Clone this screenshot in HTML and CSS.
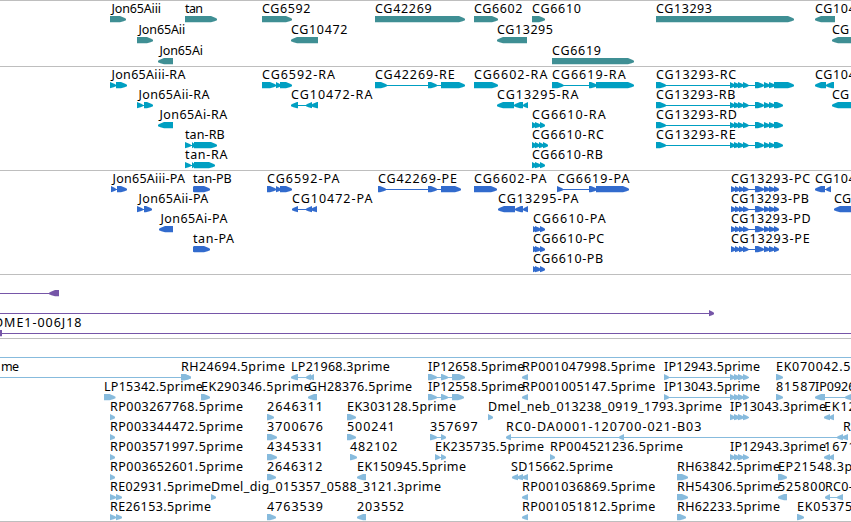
FILE: index.html
```html
<!DOCTYPE html>
<html lang="en">
<head>
<meta charset="utf-8">
<title>Genome browser</title>
<link rel="stylesheet" href="styles.css">
</head>
<body>
<main class="browser">
  <section class="track track--genes"><svg class="lane" data-track="genes"></svg></section>
  <section class="track track--transcripts"><svg class="lane" data-track="transcripts"></svg></section>
  <section class="track track--proteins"><svg class="lane" data-track="proteins"></svg></section>
  <section class="track track--clones"><svg class="lane" data-track="clones"></svg></section>
  <section class="track track--ests"><svg class="lane" data-track="ests"></svg></section>
</main>
<script src="tracks.js"></script>
</body>
</html>
```
FILE: styles.css
```css
body {
  margin: 0;
  background: #fff;
  overflow: hidden;
}

.browser {
  display: flex;
  flex-direction: column;
  width: 100%;
  height: 522px;
}

.track {
  box-sizing: border-box;
  flex: none;
  border-top: 1px solid #bebebe;
  overflow: hidden;
}

.lane {
  display: block;
  width: 100%;
  height: 100%;
}

.track--genes { height: 66px; color: #3f8f94; }
.track--transcripts { height: 104px; color: #009fc2; }
.track--proteins { height: 104px; color: #326bcd; }
.track--clones { height: 64px; color: #7656a8; }
.track--ests { height: 184px; color: #87bbdd; border-bottom: 1px solid #bebebe; }

.label {
  font-family: "Noto Sans", "DejaVu Sans", sans-serif;
  font-size: 12.5px;
  fill: #000;
}

.exon,
.intron {
  fill: currentColor;
}

.intron {
  shape-rendering: crispEdges;
}
```
FILE: tracks.js
```js
// Feature: [row, strand, label, label x, label end x, exons as "start-end ..."]
const mid = "755-764 764-770 769-775 ";
const four = "730-735 734-740 738-744 743-748.5";
const pFour = "731-736 735-740 739-744 743-748.5 ";

const tracks = {
  genes: { pitch: 21, items: [
    [0, 1, "Jon65Aiii", 110, 160.3, "110-126"],
    [0, 1, "tan", 185, 202.3, "185-217"],
    [0, 1, "CG6592", 262, 309.7, "262-292"],
    [0, 1, "CG42269", 375, 431, "375-465"],
    [0, 1, "CG6602", 474, 521.7, "474-498"],
    [0, 1, "CG6610", 532, 580.3, "532-545"],
    [0, 1, "CG13293", 656, 711.3, "656-794"],
    [0, -1, "CG10471", 815, 870.5, "815-835"],
    [1, 1, "Jon65Aii", 137, 184.5, "137-153"],
    [1, -1, "CG10472", 291, 346.7, "291-318"],
    [1, -1, "CG13295", 497, 552.3, "497-527"],
    [1, -1, "CG", 832, 848.3, "832-870"],
    [2, -1, "Jon65Ai", 158, 202.3, "158-173"],
    [2, 1, "CG6619", 552, 600.3, "552-634"]
  ]},
  transcripts: { pitch: 20, items: [
    [0, 1, "Jon65Aiii-RA", 110, 184.7, "110-116 116-127"],
    [0, 1, "CG6592-RA", 262, 334.3, "262-276 276-281 280-292"],
    [0, 1, "CG42269-RE", 375, 454, "375-387 428-437 441-465"],
    [0, 1, "CG6602-RA", 474, 546.7, "474-498"],
    [0, 1, "CG6619-RA", 552, 625, "552-563.5 589-597 596-634"],
    [0, 1, "CG13293-RC", 656, 735.5, "656-666 " + four + " " + mid + "774-794"],
    [0, -1, "CG10471", 815, 870.5, "815-826 826-834"],
    [1, 1, "Jon65Aii-RA", 137, 208.7, "137-143 144-153"],
    [1, -1, "CG10472-RA", 291, 371.7, "291-298 306-312 311-318"],
    [1, -1, "CG13295-RA", 497, 577.7, "497-514 514-523 523-528"],
    [1, 1, "CG13293-RB", 656, 734.7, "656-666 " + four + " " + mid + "774-783"],
    [1, -1, "CG", 832, 848.3, "832-870"],
    [2, -1, "Jon65Ai-RA", 158, 226.5, "158-173"],
    [2, 1, "CG6610-RA", 532, 605, "532-537 535-541 540-545"],
    [2, 1, "CG13293-RD", 656, 736.3, "656-666 " + four + " " + mid + "774-783"],
    [3, 1, "tan-RB", 185, 224, "185-191 192-195 194-217"],
    [3, 1, "CG6610-RC", 532, 603.3, "532-537 535-540 539-544 543-548"],
    [3, 1, "CG13293-RE", 656, 735, "656-666 " + four + " " + mid + "774-783"],
    [4, 1, "tan-RA", 185, 226.7, "185-191 192-195 194-215"],
    [4, 1, "CG6610-RB", 532, 602.3, "532-537 535-541 540-545"]
  ]},
  proteins: { pitch: 20, items: [
    [0, 1, "Jon65Aiii-PA", 111, 184.3, "111-116 117-127"],
    [0, 1, "tan-PB", 193, 231, "193-196 194-210"],
    [0, 1, "CG6592-PA", 267, 338.7, "267-276 276-281 280-292"],
    [0, 1, "CG42269-PE", 378, 456.3, "378-386 428-437 441-461"],
    [0, 1, "CG6602-PA", 474, 545.7, "474-497"],
    [0, 1, "CG6619-PA", 557, 628.7, "557-563 589-597 596-629"],
    [0, 1, "CG13293-PC", 731, 809.5, pFour + mid + "774-779"],
    [0, -1, "CG10471", 815, 870.5, "815-825 826-831"],
    [1, 1, "Jon65Aii-PA", 137, 207.5, "137-143 144-152"],
    [1, -1, "CG10472-PA", 292, 371.7, "292-298 306-312 311-317"],
    [1, -1, "CG13295-PA", 498, 577.7, "498-515 515-523 523-528"],
    [1, 1, "CG13293-PB", 731, 808.3, pFour + mid + "774-779"],
    [1, -1, "CG", 834, 850.3, "834-870"],
    [2, -1, "Jon65Ai-PA", 159, 226.7, "159-173"],
    [2, 1, "CG6610-PA", 533, 605, "533-537 535-541 540-545"],
    [2, 1, "CG13293-PD", 731, 810, pFour + mid + "774-779"],
    [3, 1, "tan-PA", 193, 233.3, "193-196 194-210"],
    [3, 1, "CG6610-PC", 533, 603.5, "533-537 535-541 540-545"],
    [3, 1, "CG13293-PE", 731, 809, pFour + mid + "774-779"],
    [4, 1, "CG6610-PB", 533, 602.5, "533-537 535-541 540-545"]
  ]},
  clones: { pitch: 20, items: [
    [0, -1, "", 0, 0, "-20--10 49-59"],
    [1, 1, "", 0, 0, "-20--10 709-714"],
    [2, -1, "DME1-006J18", -6, 80.7, "-10-2 860-870"]
  ]},
  ests: { pitch: 20, items: [
    [0, 1, "", 0, 0, "-20--10 860-870"],
    [1, 1, "me", 1, 18.3, "-20--10 181-191"],
    [1, 1, "RH24694.5prime", 181, 284.3, "181-191"],
    [1, -1, "LP21968.3prime", 291, 389, "291-298 306-311 309-314"],
    [1, 1, "IP12658.5prime", 428, 523.7, "428-437 441-448 452-465"],
    [1, -1, "RP001047998.5prime", 522, 654.5, "522-528"],
    [1, 1, "IP12943.5prime", 664, 759.3, "664-669 " + four],
    [1, 1, "EK070042.5", 776, 849.7, "776-783"],
    [2, 1, "LP15342.5prime", 104, 202, "104-115.5"],
    [2, 1, "EK290346.5prime", 201, 310, "201-210"],
    [2, -1, "GH28376.5prime", 308, 411.3, "308-317"],
    [2, 1, "IP12558.5prime", 428, 523.7, "428-437 441-448 452-464"],
    [2, -1, "RP001005147.5prime", 522, 654.5, "522-528"],
    [2, 1, "IP13043.5prime", 664, 759.3, "664-669 " + four],
    [2, 1, "81587", 776, 814.7, "776-783"],
    [2, -1, "IP0926", 815, 854.7, "815-825 845-860"],
    [3, 1, "RP003267768.5prime", 110, 242.3, "110-115"],
    [3, 1, "2646311", 267, 322.3, "267-274"],
    [3, 1, "EK303128.5prime", 347, 455.3, "347-356"],
    [3, 1, "Dmel_neb_013238_0919_1793.3prime", 488, 721.3, "488-493"],
    [3, 1, "IP13043.3prime", 730, 825.3, four],
    [3, -1, "EK12", 824, 855, "824-830 829-834"],
    [4, 1, "RP003344472.5prime", 110, 242.3, "110-115"],
    [4, 1, "3700676", 267, 322.3, "267-277"],
    [4, 1, "500241", 347, 394, "347-356"],
    [4, 1, "357697", 430, 477, "430-437 441-446"],
    [4, -1, "RC0-DA0001-120700-021-B03", 506, 700.7, "506-511 619-624 837-843 842-848"],
    [4, -1, "R", 843, 850.5, ""],
    [5, 1, "RP003571997.5prime", 110, 242.3, "110-115"],
    [5, 1, "4345331", 267, 322.3, "267-277"],
    [5, 1, "482102", 350, 396.7, "350-357"],
    [5, 1, "EK235735.5prime", 435, 543.3, "435-440 441-446"],
    [5, 1, "RP004521236.5prime", 550, 682.3, "550-555"],
    [5, 1, "IP12943.3prime", 730, 825.3, four],
    [5, -1, "1671", 824, 855, "824-830 829-834"],
    [6, 1, "RP003652601.5prime", 110, 242.3, "110-115"],
    [6, 1, "2646312", 267, 321.6, "267-276"],
    [6, -1, "EK150945.5prime", 357, 465.3, "357-366"],
    [6, -1, "SD15662.5prime", 511, 612.3, "512-518 517-523 522-528"],
    [6, 1, "RH63842.5prime", 677, 779.3, "677-688"],
    [6, 1, "EP21548.3p", 778, 851.5, "778-787"],
    [7, 1, "RE02931.5prime", 110, 210.3, "110-116 116-122"],
    [7, 1, "Dmel_dig_015357_0588_3121.3prime", 211, 440.3, "211-216"],
    [7, -1, "RP001036869.5prime", 522, 654.5, "522-528"],
    [7, 1, "RH54306.5prime", 677, 779.3, "677-688"],
    [7, -1, "525800", 778, 824.7, "778-787"],
    [7, -1, "RC0-", 825, 852, "825-830 837-843"],
    [8, 1, "RE26153.5prime", 110, 210.3, "110-116 116-122"],
    [8, 1, "4763539", 267, 322.3, "267-276"],
    [8, -1, "203552", 357, 403.3, "357-366"],
    [8, -1, "RP001051812.5prime", 522, 654.5, "522-528"],
    [8, 1, "RH62233.5prime", 677, 779.3, "677-686"],
    [8, 1, "EK05375", 797, 851.5, "797-804"]
  ]}
};

const NS = "http://www.w3.org/2000/svg";

function add(parent, tag, attrs) {
  const el = document.createElementNS(NS, tag);
  for (const key in attrs) el.setAttribute(key, attrs[key]);
  parent.appendChild(el);
  return el;
}

// A block whose leading edge narrows to a point in the strand direction.
function exonPoints(start, end, strand, top) {
  const head = Math.min(6, end - start);
  const tip = strand > 0 ? end : start;
  const tail = strand > 0 ? start : end;
  const neck = tip - strand * head;
  const bulge = tip - strand * head * 0.4;
  return [
    [tail, top], [neck, top], [bulge, top + 1.4], [tip, top + 2.8],
    [tip, top + 4.2], [bulge, top + 5.2], [neck, top + 6.3], [tail, top + 6.3]
  ].map(p => p.join(",")).join(" ");
}

document.querySelectorAll(".lane").forEach(svg => {
  const { pitch, items } = tracks[svg.dataset.track];
  for (const [row, strand, label, x, endX, spec] of items) {
    const y = row * pitch;
    const exons = [...spec.matchAll(/(-?[\d.]+)-(-?[\d.]+)/g)].map(m => [+m[1], +m[2]]);
    if (exons.length > 1) {
      const from = exons[0][0];
      add(svg, "rect", { class: "intron", x: from, y: y + 18, width: exons[exons.length - 1][1] - from, height: 1 });
    }
    for (const [s, e] of exons) {
      add(svg, "polygon", { class: "exon", points: exonPoints(s, e, strand, y + 15) });
    }
    if (label) {
      const start = label[0] === "J" ? x + 1.5 : x;
      add(svg, "text", { class: "label", x: start, y: y + 12, textLength: endX - start + 0.7 }).textContent = label;
    }
  }
});
```
